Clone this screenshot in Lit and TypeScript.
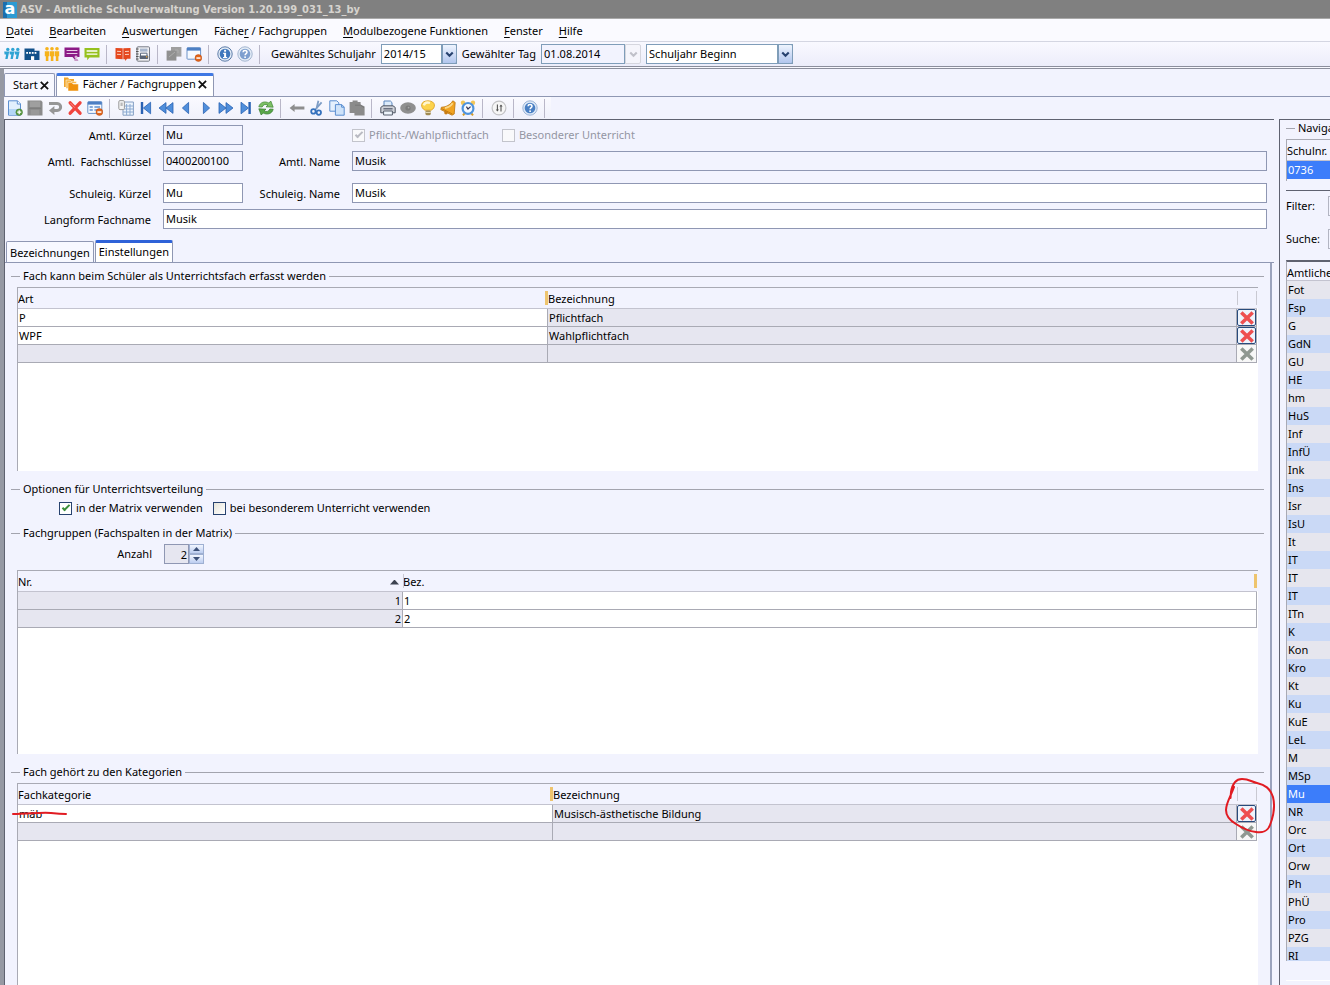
import { LitElement, html, svg, css, nothing, TemplateResult } from "lit";
import { customElement, property } from "lit/decorators.js";
import { classMap } from "lit/directives/class-map.js";

/* ---------- icon set, drawn on a 16 x 16 grid ---------- */
const people = (c: string) => svg`<g fill=${c}>
  <circle cx="3" cy="2.8" r="1.8"/><circle cx="8" cy="2.8" r="1.8"/><circle cx="13" cy="2.8" r="1.8"/>
  <path d="M.8 5.2h4.4v5H4.4V15H1.8v-4.8h-1zM5.8 5.2h4.4v5h-.8V15H6.8v-4.8h-1zM10.8 5.2h4.4v5h-.8V15h-2.6v-4.8h-1z"/></g>`;
const disc = (light = false) => svg`<circle cx="8" cy="8" r="7.2" fill="#e4ecf6" stroke=${light ? "#a3b5cf" : "#5c7ca8"} stroke-width="1"/>
  <circle cx="8" cy="8" r="5.3" fill=${light ? "#7d9fcf" : "#3f78bd"}/>`;
const question = svg`<path d="M6 6.3c.2-2.4 4-2.2 4 0 0 1.3-1.8 1.4-1.9 2.9" fill="none" stroke="#fff" stroke-width="1.5"/><rect x="7.3" y="10.4" width="1.6" height="1.6" fill="#fff"/>`;
const minusBadge = svg`<circle cx="12.4" cy="12" r="3.4" fill="#e2661c" stroke="#b9480c" stroke-width=".5"/><rect x="10.4" y="11.3" width="4" height="1.5" fill="#fff"/>`;
const BL = "#4f8edb", BD = "#2a62b3";

const icons: Record<string, TemplateResult> = {
  pupils: svg`<g fill="#2fa3d3"><circle cx="3.8" cy="3.4" r="1.7"/><circle cx="8.8" cy="3.4" r="1.7"/><circle cx="13.8" cy="3.4" r="1.7"/>
    <path d="M.2 5.6h5L3.6 13H1.3l.8-4.4H.6zM5.4 5.6h5L8.800 13H6.500l.8-4.4H5.8zM10.6 5.600h5L14 13h-2.300l.8-4.4H11z"/></g>`,
  school: svg`<path d="M.5 2.5h10v2.3h5V14H.5z" fill="#12508a"/><g fill="#fff"><rect x="2.2" y="6" width="1.8" height="1.8"/><rect x="5" y="6" width="1.8" height="1.8"/><rect x="7.8" y="6" width="1.8" height="1.8"/><rect x="10.6" y="6" width="1.8" height="1.8"/><rect x="7" y="10.2" width="3.2" height="3.8"/></g>`,
  teachers: people("#f6b21b"),
  classes: svg`<path d="M.5 1.5h15v9.5h-4v3.5L8.5 11h-8z" fill="#8b1a86"/><path d="M2.6 4.5h10.8M2.6 7.5h10.8" stroke="#e9cde8" stroke-width="1.2"/><circle cx="12" cy="11" r="1.5" fill="#d9b6d8"/><path d="M10.3 15c0-3 4-3 4 0z" fill="#c79ac6"/>`,
  lessons: svg`<path d="M.5 2h15v9.5H5.5L3.2 14.2v-2.7H.5z" fill="#96c11e"/><path d="M2.6 5h10.8M2.6 8.2h10.8" stroke="#fff" stroke-width="1.3"/>`,
  book: svg`<path d="M.5 2 7.700 2.200v11L.5 12.800zM15.5 2 8.300 2.200v11h1.800V15l2-2.200h3.4z" fill="#e5471d"/><path d="M2 5.3l4 .2M2 8.300l4 .2M10 5.500l4-.2M10 8.5l4-.2" stroke="#fbd0bf"/>`,
  report: svg`<rect x="2" y=".8" width="12.5" height="14.4" rx="1" fill="#f1f1f4" stroke="#777b86"/><path d="M1 3h2.6M1 5.5h2.6M1 8h2.6M1 10.5h2.6M1 13h2.6" stroke="#555"/><rect x="5" y="2.6" width="7.5" height="3" fill="#a9b7ce"/><path d="M5.5 10V7.2h6.5V10" fill="#fff" stroke="#5d6a80"/><rect x="4.6" y="9.4" width="8.6" height="3.6" rx=".8" fill="#5a6475"/><rect x="11" y="10.2" width="1.3" height="1.2" fill="#f4a72c"/>`,
  copyGray: svg`<rect x="5" y="1" width="10.4" height="9.6" fill="#9f9f9f"/><rect x=".6" y="4.6" width="9.8" height="10" fill="#909090"/><path d="M9 4h3v3M3 11l6-5" stroke="#adadad" fill="none"/>`,
  closeWindow: svg`<rect x="1" y="1.8" width="13.6" height="11.4" rx=".8" fill="#f5f9ff" stroke="#6c93c8"/><rect x="1" y="1.6" width="13.6" height="3" fill="#4d7fc4"/>${minusBadge}`,
  info: svg`${disc()}<rect x="7.1" y="3.8" width="2" height="1.9" fill="#fff"/><path d="M6.2 6.8h2.9v4.2h1.1v1.2H6V11h1.1V8H6.2z" fill="#fff"/>`,
  helpLight: svg`${disc(true)}${question}`,
  help: svg`<circle cx="8" cy="8" r="7.2" fill="#dce7f6" stroke="#9db6d8"/><circle cx="8" cy="8" r="5.3" fill="#4a80c4"/>${question}`,
  newDoc: svg`<path d="M1.5.8h9l3 3v11.4h-12z" fill="#e2f0fd" stroke="#5b8fd0"/><path d="M2 9h11v5.7H2z" fill="#b4d6f6"/><path d="M10.3.8v3.2h3.2" fill="#fff" stroke="#5b8fd0"/><circle cx="12.2" cy="12.2" r="3.3" fill="#5d9c45" stroke="#3d7529" stroke-width=".5"/><path d="M10.2 12.2h4M12.2 10.2v4" stroke="#fff" stroke-width="1.3"/>`,
  save: svg`<path d="M.5.6h13.6l1.4 1.4v13.4H.5z" fill="#8b8b8b"/><rect x="2.8" y="1.4" width="10.4" height="5.6" fill="#9f9f9f"/><rect x="3.6" y="9.8" width="8.8" height="5" fill="#999"/><path d="M2 8.3h12" stroke="#7b7b7b"/>`,
  undo: svg`<path d="M2 3.6h8.2c4.6 0 4.6 6.800 0 6.800H6" fill="none" stroke="#969696" stroke-width="3"/><path d="M7.4 6v9L2 10.400z" fill="#969696"/>`,
  remove: svg`<path d="M3.2 2.8l9.8 10.4M13 2.8L3.2 13.2" stroke="#f0443e" stroke-width="3.4" stroke-linecap="round"/><path d="M3.4 3l4.4 4.7" stroke="#f98a84" stroke-width="1"/>`,
  closeForm: svg`<rect x=".8" y="1.8" width="14" height="11.6" rx=".8" fill="#f5f9ff" stroke="#6c93c8"/><rect x=".8" y="1.6" width="14" height="3" fill="#4d7fc4"/><path d="M2.6 7h3.2M2.6 10h3.2M7.4 7h5.6M7.4 10h3" stroke="#5f90cf" stroke-width="1.3"/>${minusBadge}`,
  listView: svg`<path d="M5 2h10.4v13.2H5z" fill="#eef5fd" stroke="#86a0c4"/><path d="M5 6h10.4M5 9h10.4M5 12h10.4M8.6 4v11M12 4v11" stroke="#8caad2"/><rect x=".8" y=".6" width="5.6" height="9" rx="1.2" fill="#f3f3f3" stroke="#9b9b9b"/><rect x="2.5" y="2.6" width="2.2" height="3.4" fill="#b9b9b9"/>`,
  first: svg`<rect x="2.8" y="2" width="2.4" height="12" fill=${BD}/><path d="M12.600 2.2v11.6L5.4 8z" fill=${BL} stroke=${BD} stroke-width=".8"/>`,
  prevFast: svg`<path d="M8 2.6v10.8L1 8zM15 2.6v10.8L8 8z" fill=${BL} stroke=${BD} stroke-width=".8"/>`,
  prev: svg`<path d="M10.6 2.4v11.2L4.4 8z" fill=${BL} stroke=${BD} stroke-width=".8"/>`,
  next: svg`<path d="M5.4 2.4v11.2L11.6 8z" fill=${BL} stroke=${BD} stroke-width=".8"/>`,
  nextFast: svg`<path d="M1 2.6v10.8L8 8zM8 2.6v10.8L15 8z" fill=${BL} stroke=${BD} stroke-width=".8"/>`,
  last: svg`<rect x="10.4" y="2" width="2.4" height="12" fill=${BD}/><path d="M3 2.2v11.6L10.4 8z" fill=${BL} stroke=${BD} stroke-width=".8"/>`,
  refresh: svg`<path d="M.8 6.800C2 2 7 .8 10.800 3L12.8 1 15.200 7.200 8 6.800l2-1.8C7.400 3.800 5 4.600 4.200 7z" fill="#7cc065" stroke="#3c8331" stroke-width=".7"/><path d="M15.200 9.200C14 14 9 15.200 5.200 13L3.200 15 .8 8.800 8 9.200l-2 1.800c2.600 1.200 5 .4 5.800-2z" fill="#5aa84a" stroke="#357a2c" stroke-width=".7"/>`,
  back: svg`<path d="M.6 8l5-4v2.4h9.8v3.2H5.6V12z" fill="#8e8e8e"/>`,
  cut: svg`<path d="M9.4.8 7.4 9M12.6 2.4 6 10" stroke="#7d9dc6" stroke-width="1.8"/><g fill="none" stroke="#3572bd" stroke-width="1.8"><circle cx="4.4" cy="11.4" r="2.2"/><circle cx="9.8" cy="12.6" r="2.2"/></g>`,
  copy: svg`<path d="M.8.8h7l2 2v8.4h-9z" fill="#e4f0fd" stroke="#5b8fd0"/><path d="M6.4 4.6h6.4l2.4 2.4v8.2H6.4z" fill="#cfe3f9" stroke="#5b8fd0"/><path d="M12.6 4.8v2.4H15" fill="none" stroke="#5b8fd0"/>`,
  paste: svg`<path d="M.6 2h3V.6h5V2h3v2.6l4 2v8.8H5.4V13H.6z" fill="#8b8b8b"/><path d="M6 5.2h5.4l3.6 2.4" stroke="#777" fill="none"/>`,
  print: svg`<path d="M4 7V1h6.4L12 2.6V7z" fill="#dcebfb" stroke="#5d87bd"/><path d="M.8 7.4 3 5.8h10l2.2 1.6v5.4H.8z" fill="#cfd2d9" stroke="#4e5562"/><path d="M3.6 11h8.8v4H3.6z" fill="#eef4fb" stroke="#59616f"/><path d="M3.4 8.8h9.2" stroke="#50586a" stroke-width="1.2"/>`,
  eye: svg`<ellipse cx="8" cy="8" rx="7.8" ry="5.8" fill="#8f8f8f"/><circle cx="8" cy="8" r="2.6" fill="#7b7b7b"/><circle cx="8.6" cy="7.6" r=".9" fill="#a8a8a8"/>`,
  bulb: svg`<path d="M8 .8c8.4.2 7.6 7.4 3.2 9.4H5C.2 7.8-.2 1 8 .8z" fill="#fcd34d" stroke="#d99a1a" stroke-width=".8"/><path d="M3.800 5.400C4.600 2.4 7 2 10 2.800" stroke="#fff6cf" stroke-width="2.400" fill="none"/><rect x="5.4" y="10.4" width="5.4" height="4.8" rx="1.4" fill="#a08a52"/><path d="M5.4 12.4h5.4" stroke="#e9dfc0"/>`,
  bell: svg`<path d="M12.800.8 15.200 2.400l-1 11.600-2.200 1.200L.8 9.600l.6-2.400c4.600-.2 8.600-2 11.400-6.400z" fill="#f1a422" stroke="#b97412" stroke-width=".8"/><path d="M5 8c3.4-.6 5.600-2 7.600-4.800" stroke="#fbd98a" stroke-width="1.8" fill="none"/><path d="M1.600 8.600l10.800 5.400" stroke="#c27b10"/><circle cx="6" cy="12.8" r="1.800" fill="#c87c14"/>`,
  alarm: svg`<circle cx="3" cy="2.8" r="2.2" fill="#f2c658"/><circle cx="13" cy="2.8" r="2.2" fill="#f2c658"/><path d="M3 15.4l1.6-2M13 15.4l-1.6-2" stroke="#d79b25" stroke-width="2"/><circle cx="8" cy="8.4" r="5.4" fill="#f4f9ff" stroke="#4f93dc" stroke-width="2.2"/><path d="M6.400 6.6 8 9l2.600-2.4" stroke="#335" stroke-width="1.2" fill="none"/>`,
  filter: svg`<circle cx="8" cy="8" r="6.9" fill="#f6f6f6" stroke="#c3c3c6" stroke-width="1.2"/><path d="M6.4 4.6v6M10 5.400v6" stroke="#555" stroke-width="1.100"/><path d="M4.8 9.4l1.6 2.2L8 9.4zM8.4 6.6 10 4.4l1.6 2.2z" fill="#555"/>`,
  folders: svg`<path d="M1 1.5h4l1 1.4h5v3H4v5H1z" fill="#f0a52c"/><path d="M3 4h4l1 1.4h5.4v2.2H6v5H3z" fill="#f7b84a" stroke="#fff" stroke-width=".5"/><path d="M5 6.6h4l1 1.4h5.4V15H5z" fill="#f0920c" stroke="#fff" stroke-width=".5"/>`,
  cross: svg`<path d="M3.6 3.8 12.4 12.2M12.4 3.8 3.6 12.2" stroke="currentColor" stroke-width="3.600" stroke-linecap="square"/>`,
  chevron: svg`<path d="M4 5.6 8 9.6l4-4" fill="none" stroke="currentColor" stroke-width="2.6"/>`,
  close: svg`<path d="M3.4 3.6l9 9M12.4 3.6l-9 9" stroke="#111" stroke-width="2.2"/>`,
};
const icon = (name: string) => html`<svg class="icon" viewBox="0 0 16 16" aria-hidden="true">${icons[name]}</svg>`;

const base = css`
  *, *::before, *::after { box-sizing: border-box; }
  button, input, select { font: inherit; color: inherit; margin: 0; border-radius: 0; }
  button { background: none; border: 0; padding: 0; }
  .icon { display: block; width: 16px; height: 16px; flex: none; }
`;

/* ---------- icon toolbar ---------- */
@customElement("icon-bar")
export class IconBar extends LitElement {
  @property({ attribute: false }) groups: [string, string][][] = [];
  static styles = [base, css`
    :host { display: flex; align-items: center; }
    .group { display: flex; align-items: center; }
    .group::after { content: ""; width: 1px; height: 19px; margin: 0 6px 0 4px; background: #b9b7c8; }
    button { width: 20px; height: 20px; display: grid; place-items: center; }
  `];
  render() {
    return this.groups.map((g) => html`<div class="group">${g.map(([n, label]) => html`<button type="button" title=${label} aria-label=${label}>${icon(n)}</button>`)}</div>`);
  }
}

/* ---------- titled section with a rule through its heading ---------- */
@customElement("group-box")
export class GroupBox extends LitElement {
  @property() heading = "";
  static styles = [base, css`
    :host { display: flex; flex-direction: column; }
    h2 { display: flex; align-items: center; gap: 3px; margin: 0 6px; height: 16px; font: inherit; white-space: nowrap; }
    h2::before, h2::after { content: ""; height: 1px; background: #a3a4ae; width: 9px; }
    h2::after { flex: 1; }
  `];
  render() {
    return html`<h2>${this.heading}</h2><slot></slot>`;
  }
}

interface Column { title: string; width?: number; grip?: boolean; sorted?: boolean; }
interface Cell { text: string; off?: boolean; right?: boolean; }
interface Row { cells: Cell[]; del?: "on" | "off"; }

/* ---------- data grid ---------- */
@customElement("data-grid")
export class DataGrid extends LitElement {
  @property({ attribute: false }) columns: Column[] = [];
  @property({ attribute: false }) rows: Row[] = [];
  @property({ type: Boolean }) deletable = false;
  static styles = [base, css`
    :host { display: block; background: #fff; border-left: 1px solid #a9aab4; border-top: 1px solid #a9aab4; overflow: hidden; }
    .head-fill { background: linear-gradient(#f2f3fe, #f2f3fe) no-repeat 0 0 / 100% 20px; padding-right: 1px; }
    table { width: 100%; border-collapse: separate; border-spacing: 0; table-layout: fixed; }
    th { position: relative; height: 21px; padding: 2px 0 0; text-align: left; font-weight: normal; background: #f2f3fe; border-bottom: 1px solid #c3c3cf; }
    th.grip::after { content: ""; position: absolute; right: 0; top: 3px; bottom: 3px; width: 3px; background: #eec46e; }
    th.line::before { content: ""; position: absolute; left: 0; top: 3px; bottom: 3px; width: 1px; background: #c9c9d2; }
    th.line.end::after { content: ""; position: absolute; right: 0; top: 3px; bottom: 3px; width: 1px; background: #c9c9d2; }
    .title { display: flex; justify-content: space-between; align-items: center; padding: 0 4px 0 0; }
    .arrow { width: 9px; height: 5px; background: #3d4350; clip-path: polygon(50% 0, 100% 100%, 0 100%); }
    td { height: 18px; padding: 0 0 0 1px; border-right: 1px solid #a9aab4; border-bottom: 1px solid #a9aab4; line-height: 16px; white-space: nowrap; overflow: hidden; }
    td.off { background: #e6e6f0; }
    td.right { text-align: right; padding-right: 1px; }
    td.del { padding: 0; background: #f2f3fe; }
    button { display: grid; place-items: center; width: 19px; height: 17px; color: #8f9891; background: #f7f7f7; }
    button.on { color: #ee4f50; background: #eef3fc; border: 1px solid #284b7c; border-radius: 2px; }
    button .icon { width: 16px; height: 16px; }
  `];
  render() {
    return html`<div class="head-fill"><table>
      <colgroup>${this.columns.map((c) => (c.width ? html`<col width=${c.width}>` : html`<col>`))}${this.deletable ? html`<col width="20">` : nothing}</colgroup>
      <thead><tr>
        ${this.columns.map((c, i) => html`<th scope="col" class=${classMap({ grip: !!c.grip, line: !!this.columns[i - 1]?.sorted })}>
          <div class="title"><span>${c.title}</span>${c.sorted ? html`<span class="arrow"></span>` : nothing}</div></th>`)}
        ${this.deletable ? html`<th class="line end" aria-label="Löschen"></th>` : nothing}
      </tr></thead>
      <tbody>${this.rows.map((r) => html`<tr>
        ${r.cells.map((c) => html`<td class=${classMap({ off: !!c.off, right: !!c.right })}>${c.text}</td>`)}
        ${this.deletable ? html`<td class="del"><button type="button" class=${r.del ?? "off"} ?disabled=${r.del !== "on"} aria-label="Löschen">${icon("cross")}</button></td>` : nothing}
      </tr>`)}</tbody></table></div>`;
  }
}

/* ---------- navigation on the right ---------- */
const subjects = "Fot Fsp G GdN GU HE hm HuS Inf InfÜ Ink Ins Isr IsU It IT IT IT ITn K Kon Kro Kt Ku KuE LeL M MSp Mu NR Orc Ort Orw Ph PhÜ Pro PZG RI".split(" ");

@customElement("side-nav")
export class SideNav extends LitElement {
  static styles = [base, css`
    :host { display: block; border-left: 1px solid #5f6270; border-top: 1px solid #5f6270; padding-left: 6px; overflow: hidden; white-space: nowrap; }
    h2 { display: flex; align-items: center; gap: 3px; margin: 0 0 3px; height: 16px; font: inherit; }
    h2::before { content: ""; flex: none; width: 9px; height: 1px; background: #a3a4ae; }
    table { width: 100%; border-spacing: 0; border-collapse: separate; table-layout: fixed; }
    th { padding: 2px 0 0; text-align: left; font-weight: normal; height: 21px; border-bottom: 1px solid #c3c3cf; }
    td { padding: 0 0 0 1px; height: 18px; line-height: 18px; background: #e6e6ee; }
    .school { border-left: 1px solid #a9aab4; border-top: 1px solid #a9aab4; height: 42px; overflow: hidden; }
    tr:nth-child(even) td { background: #cad9f6; }
    tr.picked:nth-child(n) td { background: #3c7dfa; color: #fff; }
    .search { border-top: 1px solid #5f6270; margin-top: 9px; padding-top: 5px; display: grid; grid-template-columns: 42px 90px; row-gap: 13px; }
    label { line-height: 20px; }
    .search input { height: 20px; width: 90px; border: 1px solid #b3b5c2; background: #f2f3fe; }
    .list { border-left: 1px solid #a9aab4; border-top: 2px solid #5f6270; margin-top: 11px; height: 701px; overflow: hidden; }
    .list th { height: 19px; line-height: 15px; padding-top: 3px; }
    .foot { height: 20px; border-bottom: 1px solid #fff; }
  `];
  render() {
    return html`<h2>Navigation</h2>
      <div class="school"><table><thead><tr><th scope="col">Schulnr.</th></tr></thead><tbody><tr class="picked"><td>0736</td></tr></tbody></table></div>
      <div class="search">
        <label for="f">Filter:</label><input id="f">
        <label for="s">Suche:</label><input id="s">
      </div>
      <div class="list"><table><thead><tr><th scope="col">Amtliche</th></tr></thead>
        <tbody>${subjects.map((s) => html`<tr class=${s === "Mu" ? "picked" : ""}><td>${s}</td></tr>`)}</tbody></table></div>
      <div class="foot"></div>`;
  }
}

const off = (text = ""): Cell => ({ text, off: true });

@customElement("app-root")
export class AppRoot extends LitElement {
  static styles = [base, css`
    :host { display: flex; flex-direction: column; height: 100vh; overflow: hidden; background: #f2f3fe; color: #000; font: 11px/16px "Noto Sans", sans-serif; }
    .titlebar { display: flex; align-items: center; gap: 3px; height: 19px; padding: 1px 3px 0; background: #808080; color: #d6d3ce; border-bottom: 1px solid #a9a9a9; font: bold 11px/16px "DejaVu Sans Condensed", sans-serif; }
    .logo { width: 14px; height: 16px; background: linear-gradient(90deg, #1b6fae 4px, #2d9bd3 4px); color: #fff; font: bold 16px/14px "DejaVu Sans", sans-serif; text-align: center; }
    .menu { display: flex; align-items: center; gap: 16px; height: 23px; padding: 2px 6px 0; background: #fafaff; border-bottom: 1px solid #d4d6e2; }
    .menu u { text-underline-offset: 2px; }
    .tools { display: flex; align-items: center; height: 27px; padding-left: 2px; background: linear-gradient(#f9f9ff, #ecedfa); border-bottom: 3px solid #8b8e9c; border-bottom-style: double; }
    .tools label { margin-right: 5px; }
    .tools icon-bar { margin-right: 5px; }
    .combo { display: grid; grid-template-columns: 1fr 16px; height: 20px; margin-right: 5px; color: #000; }
    .combo select, .combo input { grid-area: 1 / 1 / 2 / 3; width: 100%; height: 20px; appearance: none; border: 1px solid #7f9db9; background: #fff; padding: 0 18px 0 2px; line-height: 16px; outline: 0; }
    .combo input { grid-area: 1 / 1; padding: 0 2px 2px; background: #f2f3fe; }
    .combo .arrow { grid-area: 1 / 2; display: grid; place-items: center; border: 1px solid #7f9db9; border-left-width: 2px; background: linear-gradient(#eef4fe, #b2c6ee); color: #27426f; pointer-events: none; border-radius: 0 2px 2px 0; }
    .combo button.arrow { background: #f5f5fb; border: 1px solid #d5d6de; color: #c0c1c9; }
    .combo .arrow .icon { width: 13px; height: 13px; }
    .year { width: 76px; } .date { width: 100px; } .start { width: 147px; }

    .frame { flex: 1; min-height: 0; display: flex; flex-direction: column; border-left: 4px solid #9699a3; }
    .tabs { display: flex; align-items: flex-end; gap: 1px; height: 28px; border-bottom: 1px solid #8f97b3; padding-top: 4px; }
    .tab { display: flex; align-items: flex-start; height: 23px; background: #f7f8ff; border: 1px solid #8f97b3; border-bottom: 0; border-radius: 2px 2px 0 0; white-space: nowrap; padding: 3px 6px 0 8px; }
    .tab.active { background: #fff; border-top: 3px solid #3f78e4; padding: 0 4px 0 6px; }
    .tab .label { display: flex; align-items: center; gap: 4px; }
    .tab .x { width: 13px; height: 16px; display: grid; place-items: center; }
    .tab .x .icon { width: 13px; height: 13px; }
    .tab:not(.active) .x { margin-right: -3px; }
    .actions { display: flex; height: 22px; padding-left: 1px; background: #f2f3fe; }
    .actions icon-bar { background: linear-gradient(#fafaff, #f0f1fb); }
    .work { flex: 1; min-height: 0; display: flex; gap: 5px; }
    .main { flex: 1; min-width: 0; display: flex; flex-direction: column; border-top: 1px solid #5f6270; border-left: 1px solid #5f6270; }
    side-nav { width: 51px; flex: none; }
    .form { display: grid; grid-template-columns: 146px 80px 85px 1fr; column-gap: 12px; row-gap: 6px; padding: 5px 7px 0 0; align-items: center; }
    .form label { text-align: right; white-space: pre; padding-top: 2px; }
    .form input.field { width: 100%; height: 20px; border: 1px solid #8f97b3; padding: 0 2px 1px; background: #fff; outline: 0; }
    .form input.field[readonly] { background: #f2f3fe; }
    .form .own { margin-top: 6px; }
    .form .wide { grid-column: 2 / 5; }
    .checks { grid-column: 4; display: flex; gap: 13px; }
    .check { display: flex; align-items: center; gap: 4px; }
    .form .check { text-align: left; color: #9496a3; padding: 0; }
    .check input { appearance: none; width: 13px; height: 13px; border: 1px solid #27426f; background: linear-gradient(135deg, #e6e4da, #fff); display: grid; place-items: center; }
    .check input:checked { background: #fff; }
    .check input:checked::before { content: ""; width: 8px; height: 4px; border: solid #3a8f3a; border-width: 0 0 2px 2px; rotate: -45deg; translate: 0 -1px; }
    .check input:disabled { border-color: #c3c4cc; background: #f9f9fb; }
    .check input:disabled::before { border-color: #b9bac2; }
    .subtabs { display: flex; align-items: flex-end; gap: 1px; height: 23px; margin-top: 11px; padding-left: 1px; border-bottom: 1px solid #8f97b3; }
    .subtabs button { height: 21px; padding: 2px 3px 0; background: #f7f8ff; border: 1px solid #8f97b3; border-bottom: 0; border-radius: 2px 2px 0 0; }
    .subtabs .active { height: 22px; padding: 0 3px 2px; background: #fff; border-top: 3px solid #2f62d8; }
    .panel { flex: 1; min-height: 0; display: flex; flex-direction: column; margin-right: 2px; padding-top: 5px; border-right: 2px solid #9ba3bd; }
    data-grid { margin: 3px 12px 0; }
    .one { height: 203px; }
    .one data-grid, .three data-grid { height: 184px; }
    .opts { height: 44px; margin-top: 10px; }
    .three { height: 229px; }
    .three data-grid { margin-top: 6px; }
    .four { flex: 1; min-height: 0; position: relative; margin-top: 10px; }
    .four data-grid { flex: 1; }
    .options { display: flex; gap: 10px; margin: 3px 0 0 54px; }
    .count { display: flex; align-items: center; gap: 12px; height: 20px; margin-top: 3px; }
    .count label { width: 147px; text-align: right; }
    .spin { display: grid; grid-template-columns: 25px 15px; height: 20px; }
    .spin input { appearance: textfield; height: 20px; width: 25px; border: 1px solid #8f97b3; background: #e6e6f0; text-align: right; padding: 0 1px; outline: 0; }
    .spin input::-webkit-inner-spin-button { display: none; }
    .steps { display: grid; }
    .steps button { display: grid; place-items: center; border: 1px solid #9fb0d2; background: linear-gradient(#f2f6ff, #bccdf0); color: #3c5078; }
    .steps i { width: 7px; height: 4px; background: currentColor; clip-path: polygon(50% 0, 100% 100%, 0 100%); }
    .steps .down i { rotate: 180deg; }
    .mark { position: absolute; pointer-events: none; overflow: visible; fill: none; stroke: #e11b22; stroke-width: 2; stroke-linecap: round; z-index: 1; }
    .strike { left: 7px; top: 46px; width: 55px; height: 8px; }
    .ring { right: -5px; top: 14px; width: 50px; height: 56px; }
  `];

  render() {
    const menu: [string, string, string][] = [["", "D", "atei"], ["", "B", "earbeiten"], ["", "A", "uswertungen"], ["Fäche", "r", " / Fachgruppen"], ["", "M", "odulbezogene Funktionen"], ["", "F", "enster"], ["", "H", "ilfe"]];
    return html`
      <header>
        <div class="titlebar"><span class="logo">a</span><span>ASV - Amtliche Schulverwaltung Version 1.20.199_031_13_by</span></div>
        <nav class="menu">${menu.map(([a, u, b]) => html`<button type="button">${a}<u>${u}</u>${b}</button>`)}</nav>
        <div class="tools">
          <icon-bar .groups=${[
            [["pupils", "Schüler"], ["school", "Schule"], ["teachers", "Lehrkräfte"], ["classes", "Klassen"], ["lessons", "Unterricht"]],
            [["book", "Buch"], ["report", "Berichte"]],
            [["copyGray", "Kopieren"], ["closeWindow", "Schließen"]],
            [["info", "Info"], ["helpLight", "Hilfe"]],
          ]}></icon-bar>
          <label for="year">Gewähltes Schuljahr</label>
          <div class="combo year"><select id="year"><option>2014/15</option></select><span class="arrow">${icon("chevron")}</span></div>
          <label for="date">Gewählter Tag</label>
          <div class="combo date"><input id="date" value="01.08.2014" readonly><button type="button" class="arrow" disabled aria-label="Kalender">${icon("chevron")}</button></div>
          <div class="combo start"><select aria-label="Stichtag"><option>Schuljahr Beginn</option></select><span class="arrow">${icon("chevron")}</span></div>
        </div>
      </header>
      <div class="frame">
        <div class="tabs">
          <div class="tab"><button type="button" class="label">Start</button><button type="button" class="x" aria-label="Schließen">${icon("close")}</button></div>
          <div class="tab active"><button type="button" class="label">${icon("folders")}Fächer / Fachgruppen</button><button type="button" class="x" aria-label="Schließen">${icon("close")}</button></div>
        </div>
        <div class="actions"><icon-bar .groups=${[
          [["newDoc", "Neu"], ["save", "Speichern"], ["undo", "Rückgängig"], ["remove", "Löschen"], ["closeForm", "Maske schließen"]],
          [["listView", "Liste"], ["first", "Erster"], ["prevFast", "Zurück springen"], ["prev", "Zurück"], ["next", "Weiter"], ["nextFast", "Vor springen"], ["last", "Letzter"], ["refresh", "Aktualisieren"]],
          [["back", "Herkunft"], ["cut", "Ausschneiden"], ["copy", "Kopieren"], ["paste", "Einfügen"]],
          [["print", "Drucken"], ["eye", "Ansicht"], ["bulb", "Hinweis"], ["bell", "Erinnerung"], ["alarm", "Wiedervorlage"]],
          [["filter", "Einstellungen"]],
          [["help", "Hilfe"]],
        ]}></icon-bar></div>
        <div class="work">
          <main class="main">
            <form class="form">
              <label for="ak">Amtl. Kürzel</label><input class="field" id="ak" value="Mu" readonly>
              <div class="checks">
                <label class="check"><input type="checkbox" checked disabled>Pflicht-/Wahlpflichtfach</label>
                <label class="check"><input type="checkbox" disabled>Besonderer Unterricht</label>
              </div>
              <label for="as">Amtl.  Fachschlüssel</label><input class="field" id="as" value="0400200100" readonly>
              <label for="an">Amtl. Name</label><input class="field" id="an" value="Musik" readonly>
              <label class="own" for="sk">Schuleig. Kürzel</label><input class="field own" id="sk" value="Mu">
              <label class="own" for="sn">Schuleig. Name</label><input class="field own" id="sn" value="Musik">
              <label for="lf">Langform Fachname</label><input class="field wide" id="lf" value="Musik">
            </form>
            <div class="subtabs"><button type="button">Bezeichnungen</button><button type="button" class="active">Einstellungen</button></div>
            <div class="panel">
              <group-box class="one" heading="Fach kann beim Schüler als Unterrichtsfach erfasst werden">
                <data-grid deletable
                  .columns=${[{ title: "Art", width: 530, grip: true }, { title: "Bezeichnung" }]}
                  .rows=${[
                    { cells: [{ text: "P" }, off("Pflichtfach")], del: "on" },
                    { cells: [{ text: "WPF" }, off("Wahlpflichtfach")], del: "on" },
                    { cells: [off(), off()] },
                  ]}></data-grid>
              </group-box>
              <group-box class="opts" heading="Optionen für Unterrichtsverteilung">
                <div class="options">
                  <label class="check"><input type="checkbox" checked>in der Matrix verwenden</label>
                  <label class="check"><input type="checkbox">bei besonderem Unterricht verwenden</label>
                </div>
              </group-box>
              <group-box class="three" heading="Fachgruppen (Fachspalten in der Matrix)">
                <div class="count"><label for="n">Anzahl</label>
                  <div class="spin"><input id="n" type="number" value="2"><div class="steps"><button type="button" aria-label="Mehr"><i></i></button><button type="button" class="down" aria-label="Weniger"><i></i></button></div></div>
                </div>
                <data-grid
                  .columns=${[{ title: "Nr.", width: 385, sorted: true }, { title: "Bez.", grip: true }]}
                  .rows=${["1", "2"].map((n) => ({ cells: [{ text: n, off: true, right: true }, { text: n }] }))}></data-grid>
              </group-box>
              <group-box class="four" heading="Fach gehört zu den Kategorien">
                <data-grid deletable
                  .columns=${[{ title: "Fachkategorie", width: 535, grip: true }, { title: "Bezeichnung" }]}
                  .rows=${[
                    { cells: [{ text: "mäb" }, off("Musisch-ästhetische Bildung")], del: "on" },
                    { cells: [off(), off()] },
                  ]}></data-grid>
                <svg class="mark strike" viewBox="0 0 55 8"><path d="M1 4C16 4 30 2 39 3s10 1 15 1"/></svg>
                <svg class="mark ring" viewBox="0 0 50 56"><path d="M5.500 20 6 14C7 8 10 1 17 1s10 3 15 4c8 2 13 5 16 14 2 8 1 18-3 28-2 6-8 8-14 7-8-1-14-4-20-8C4 42 1 38 1 32 1 25 6 18 9 9"/></svg>
              </group-box>
            </div>
          </main>
          <side-nav></side-nav>
        </div>
      </div>`;
  }
}
